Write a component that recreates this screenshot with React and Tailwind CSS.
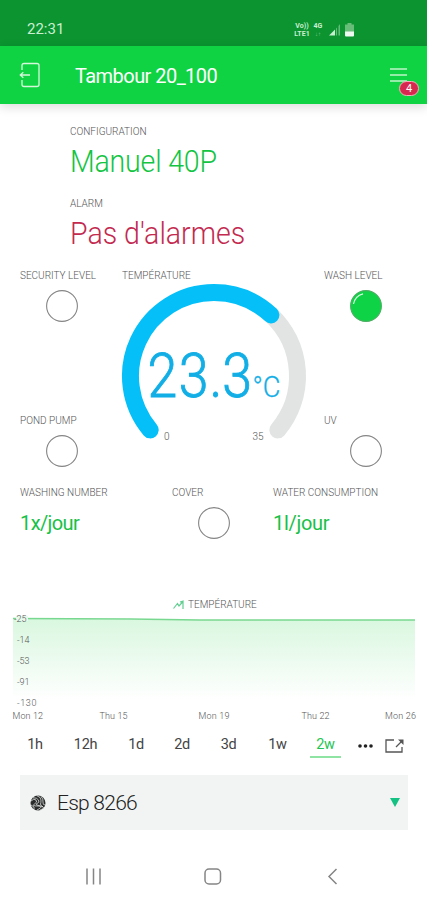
import React from 'react'

const ranges = [
  { label: '1h', box: 'w-[50px]' },
  { label: '12h', box: 'w-[51px]' },
  { label: '1d', box: 'w-[50px]' },
  { label: '2d', box: 'w-[42px]' },
  { label: '3d', box: 'w-[51px]' },
  { label: '1w', box: 'w-[47px]' },
]

const Label = ({ children, className = '' }) => (
  <div className={`h-3 text-[10px] leading-3 font-light whitespace-nowrap text-[#555] ${className}`}>{children}</div>
)

const Led = ({ on = false, className = '' }) => (
  <svg className={`block size-8 shrink-0 ${className}`} viewBox="0 0 32 32" fill="none">
    <circle cx="16" cy="16" r="15.4" fill={on ? '#0fd346' : 'none'} stroke={on ? '#4caf63' : '#858585'} strokeWidth="1.1" />
    {on && <path d="M3.5 14A13 13 0 0 1 13 3.8" stroke="#d9fbe0" strokeWidth="1.2" />}
  </svg>
)

const StatusBar = () => (
  <div className="flex h-[46px] items-center bg-[#0b9430] pt-[13px] pl-[27px] text-[#c9efd0]">
    <span className="w-[266px] text-[15px] leading-none font-normal">22:31</span>
    <div className="w-[18px] text-center text-[7px] leading-[8px] font-bold">
      <div>Vo))</div>
      <div>LTE1</div>
    </div>
    <div className="ml-px w-3 text-center text-[7px] leading-[8px] font-bold">
      <div>4G</div>
      <div className="text-[6px] font-normal opacity-60">↓↑</div>
    </div>
    <svg className="ml-[5px] h-[13px] w-[11px]" viewBox="0 0 11 13">
      <path d="M0 12.5L6 6.5V12.5Z" fill="currentColor" />
      <path d="M7 5.5L8 4.5V12.5H7ZM9.5 3L11 1V12.5H9.5Z" fill="currentColor" opacity=".45" />
    </svg>
    <svg className="ml-[5px] h-[14px] w-[9px]" viewBox="0 0 9 14">
      <path d="M2.5 0H6.5V1.5H9V9H0V1.5H2.5Z" fill="#68bd78" />
      <path d="M0 8.5H9V12.5Q9 13.5 8 13.5H1Q0 13.5 0 12.5Z" fill="#eefaf0" />
    </svg>
  </div>
)

const Header = () => (
  <div className="flex h-[58px] items-center bg-[#10d343] pl-[19px] text-white shadow-[0_3px_10px_rgba(0,0,0,0.14)]">
    <svg className="h-[26px] w-[21px]" viewBox="0 0 21 26" fill="none" stroke="#d5f8dc" strokeWidth="1.3">
      <path d="M3 8V3.5Q3 1.5 5 1.5H18Q20 1.5 20 3.5V22.5Q20 24.5 18 24.5H5Q3 24.5 3 22.5V18" />
      <path d="M11 13H1.5M4.3 10.3L1.3 13L4.3 15.7" />
    </svg>
    <h1 className="ml-[35px] w-[315px] pt-px text-[20px] leading-none font-normal tracking-[-0.55px]">Tambour 20_100</h1>
    <div className="relative">
      <svg className="block h-[16px] w-[17px]" viewBox="0 0 17 16" stroke="#c0f5cb" strokeWidth="1.5">
        <path d="M0 2H17M0 8H17M0 14H17" />
      </svg>
      <span className="absolute top-[14px] left-[9px] flex h-[15px] w-5 items-center justify-center rounded-full border border-[#f3b3bd] bg-[#d8284f] text-[11px] leading-none font-normal">4</span>
    </div>
  </div>
)

const Gauge = () => (
  <svg className="mt-[2px] block h-[160px] w-[184px] overflow-visible" viewBox="122 284 184 160" fill="none">
    <g strokeWidth="17" strokeLinecap="round">
      <path d="M270.900 314.900A83.500 83.500 0 0 1 277.800 429.900" stroke="#e1e4e3" />
      <path d="M150.200 429.900A83.500 83.500 0 0 1 214 292.500A83.500 83.500 0 0 1 270.900 314.900" stroke="#04bff8" />
    </g>
    <g fill="#12aee6" stroke="#12aee6">
      <text x="0 35.500 70.500 85" y="397.500" fontSize="61" strokeWidth=".9" transform="translate(147.500 0) scale(.88 1)">23.3</text>
      <text x="252.500" y="397" fontSize="30" strokeWidth=".3" textLength="28" lengthAdjust="spacingAndGlyphs">°C</text>
    </g>
    <g fill="#555" fontSize="10">
      <text x="164" y="440">0</text>
      <text x="252.500" y="440">35</text>
    </g>
  </svg>
)

const Chart = () => (
  <svg className="block h-[112px] w-[427px]" viewBox="0 612 427 112">
    <defs>
      <linearGradient id="area" x1="0" y1="0" x2="0" y2="1">
        <stop offset="0" stopColor="#d9f7df" />
        <stop offset="1" stopColor="#ffffff" />
      </linearGradient>
    </defs>
    <path d="M13 618.500L200 620H415V700H13Z" fill="url(#area)" />
    <path d="M13 618.500L130 619L200 620H415" fill="none" stroke="#79d890" strokeWidth="1.7" />
    <path d="M16 618.500H28" stroke="#e7faeb" strokeWidth="5" />
    <g fill="#555" fontSize="9">
      <text x="14" y="621.500">-25</text>
      <text x="17" y="642.500">-14</text>
      <text x="17" y="663.500">-53</text>
      <text x="17" y="684.500">-91</text>
      <text x="17" y="705.500" textLength="19.500">-130</text>
      <text x="12.500" y="719" textLength="30.500">Mon 12</text>
      <text x="99.500" y="719" textLength="28">Thu 15</text>
      <text x="198.500" y="719" textLength="31">Mon 19</text>
      <text x="301.500" y="719" textLength="28">Thu 22</text>
      <text x="385" y="719" textLength="31">Mon 26</text>
    </g>
  </svg>
)

const RangeBar = () => (
  <div className="flex h-[34px] items-center pl-[10px] text-[14.5px] font-normal tracking-[-0.3px] text-[#444]">
    {ranges.map((r) => (
      <span key={r.label} className={`pt-0.5 text-center ${r.box}`}>{r.label}</span>
    ))}
    <span className="ml-[9px] flex h-[27px] w-[31px] items-center justify-center border-b-2 border-[#8fe3a3] pt-1 text-[#1fc553]">2w</span>
    <svg className="mt-1 ml-[17px] h-4 w-[15px]" viewBox="0 0 15 16" fill="#222">
      <circle cx="2" cy="8" r="1.8" />
      <circle cx="7.500" cy="8" r="1.8" />
      <circle cx="13" cy="8" r="1.8" />
    </svg>
    <svg className="mt-1 ml-[12px] h-4 w-5" viewBox="0 0 20 16" fill="none" stroke="#555" strokeWidth="1.3">
      <path d="M9 2H1V14H17V9" />
      <path d="M11 9L17.500 2.500" />
      <path d="M13 1.500H18.500V7Z" fill="#555" stroke="none" />
    </svg>
  </div>
)

const DeviceSelect = () => (
  <div className="mx-5 flex h-[55px] w-[388px] items-center bg-[#f1f4f3] pl-[10px]">
    <svg className="size-4" viewBox="0 0 16 16" fill="none">
      <circle cx="8" cy="8" r="7.500" fill="#2b2b2b" />
      <g stroke="#f1f4f3" strokeWidth=".7">
        <path d="M1 6Q4 3 6 5T4.500 9T8 11T7 15" />
        <path d="M3 2.800Q7 2.500 8.500 5T7 8.500T10.500 11T10 15" />
        <path d="M7 .8Q11 2 11 5T10.500 9T13 12" />
        <path d="M11 1.500Q13.500 4 13 7T15 10M1 10L4 12L4 14.500" />
      </g>
    </svg>
    <span className="ml-[11px] w-[333px] pt-0.5 text-[21px] leading-none tracking-[-0.75px] text-[#222]">Esp 8266</span>
    <svg className="h-[9px] w-[10px]" viewBox="0 0 10 9">
      <path d="M0 0H10L5 9Z" fill="#13c183" />
    </svg>
  </div>
)

const NavBar = () => (
  <svg className="mt-[37px] block h-5 w-[427px]" viewBox="0 867 427 20" fill="none" stroke="#858585" strokeWidth="1.500">
    <path d="M87 868.500V884.500M93.500 868.500V884.500M100 868.500V884.500" />
    <rect x="205" y="869" width="15.500" height="15" rx="4" />
    <path d="M336.500 869L329 876.500L336.500 884" />
  </svg>
)

const App = () => {
  return (
    <div className="h-[900px] w-[427px] overflow-hidden bg-white font-['Roboto','Liberation_Sans',sans-serif] font-light">
      <StatusBar />
      <Header />

      <div className="pt-[22px] pl-[70px]">
        <Label>CONFIGURATION</Label>
        <div className="mt-[5px] h-[37px] w-max origin-left scale-x-[0.92] text-[31px] leading-[37px] tracking-[-0.2px] text-[#12c442]">Manuel 40P</div>
        <Label className="mt-[18px]">ALARM</Label>
        <div className="mt-[5px] h-[37px] w-max origin-left scale-x-[0.92] text-[31px] leading-[37px] text-[#c32a50]">Pas d'alarmes</div>
      </div>

      <div className="mt-[18px] flex h-[217px] pl-5">
        <div className="w-[102px]">
          <Label>SECURITY LEVEL</Label>
          <Led className="mt-2 ml-[26px]" />
          <Label className="mt-[93px]">POND PUMP</Label>
          <Led className="mt-2 ml-[26px]" />
        </div>
        <div className="w-[202px]">
          <Label>TEMPÉRATURE</Label>
          <Gauge />
        </div>
        <div>
          <Label>WASH LEVEL</Label>
          <Led on className="mt-2 ml-[26px]" />
          <Label className="mt-[93px]">UV</Label>
          <Led className="mt-2 ml-[26px]" />
        </div>
      </div>

      <div className="flex h-[111px] pl-5 text-[20px] font-normal tracking-[-0.6px] text-[#18c047]">
        <div className="w-[152px]">
          <Label className="tracking-normal">WASHING NUMBER</Label>
          <div className="mt-2 leading-8">1x/jour</div>
        </div>
        <div className="w-[101px]">
          <Label className="tracking-normal">COVER</Label>
          <Led className="mt-2 ml-[26px]" />
        </div>
        <div>
          <Label className="tracking-normal">WATER CONSUMPTION</Label>
          <div className="mt-2 leading-8 tracking-[-0.3px]">1l/jour</div>
        </div>
      </div>

      <div className="flex h-[14px] items-center pl-[173px]">
        <svg className="h-[10px] w-3" viewBox="0 0 12 10" fill="none" stroke="#62cf91" strokeWidth="1.200">
          <path d="M.5 8.500L4.500 3.500L6 6L10 1.500V9M7 2L10 1.200" />
        </svg>
        <Label className="ml-[3px]">TEMPÉRATURE</Label>
      </div>
      <Chart />
      <div className="mt-[3px] mb-[14px]">
        <RangeBar />
      </div>
      <DeviceSelect />
      <NavBar />
    </div>
  )
}

export default App
